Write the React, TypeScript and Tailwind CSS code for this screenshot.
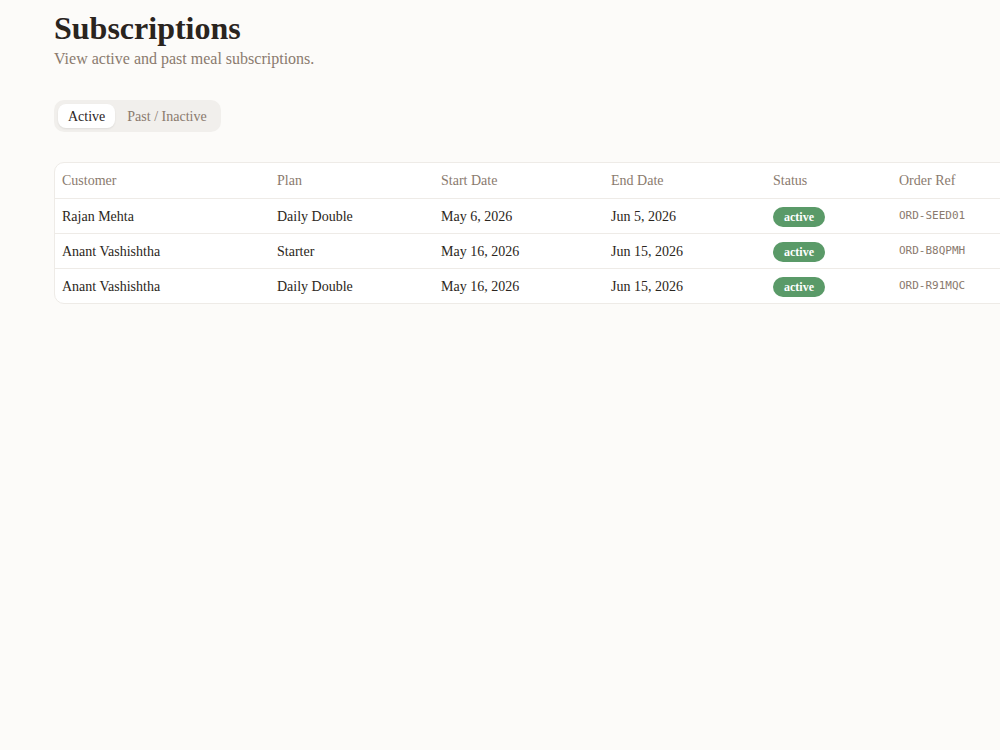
import React from "react";

const rows = [
  { c: "Rajan Mehta", p: "Daily Double", s: "May 6, 2026", e: "Jun 5, 2026", r: "ORD-SEED01" },
  { c: "Anant Vashishtha", p: "Starter", s: "May 16, 2026", e: "Jun 15, 2026", r: "ORD-B8QPMH" },
  { c: "Anant Vashishtha", p: "Daily Double", s: "May 16, 2026", e: "Jun 15, 2026", r: "ORD-R91MQC" },
];

const serif = { fontFamily: "Georgia, 'Liberation Serif', 'DejaVu Serif', serif" };

export default function App() {
  return (
    <div className="min-h-[750px] w-[1000px] overflow-hidden bg-[#fcfbf9] text-[#2b2620]" style={serif}>
      <div className="pl-[54px] pt-[10px]">
        <h1 className="text-[32px] font-bold leading-[37px] text-[#2a241e]">Subscriptions</h1>
        <p className="mt-[2px] text-[16px] leading-[20px] text-[#8a7a6e]">View active and past meal subscriptions.</p>
        <div className="mt-[31px] inline-flex h-[32px] items-center gap-[2px] rounded-[10px] bg-[#f1efec] p-[4px]">
          <button className="h-[24px] rounded-[8px] bg-white px-[10px] text-[14px] text-[#2a241e] shadow-[0_1px_2px_rgba(0,0,0,0.08)]">Active</button>
          <button className="h-[24px] px-[10px] text-[14px] text-[#8a7a6e]">Past / Inactive</button>
        </div>
        <div className="mt-[30px] w-[1100px] overflow-hidden rounded-[10px] border border-[#eeebe7] bg-white">
          <table className="w-full border-collapse text-left text-[14px]">
            <thead>
              <tr className="h-[35px] border-b border-[#eeebe7] text-[#8a7a6e]">
                <th className="w-[215px] pl-[7px] font-normal">Customer</th>
                <th className="w-[164px] pl-[7px] font-normal">Plan</th>
                <th className="w-[170px] pl-[7px] font-normal">Start Date</th>
                <th className="w-[162px] pl-[7px] font-normal">End Date</th>
                <th className="w-[126px] pl-[7px] font-normal">Status</th>
                <th className="pl-[7px] font-normal">Order Ref</th>
              </tr>
            </thead>
            <tbody>
              {rows.map((row, i) => (
                <tr key={i} className={"h-[35px] " + (i < rows.length - 1 ? "border-b border-[#eeebe7]" : "")}>
                  <td className="pl-[7px] pt-[1px]">{row.c}</td>
                  <td className="pl-[7px] pt-[1px]">{row.p}</td>
                  <td className="pl-[7px] pt-[1px]">{row.s}</td>
                  <td className="pl-[7px] pt-[1px]">{row.e}</td>
                  <td className="pl-[7px] pt-[1px]">
                    <span className="inline-flex h-[20px] items-center rounded-full bg-[#5a9a68] px-[11px] text-[12px] font-bold text-white">active</span>
                  </td>
                  <td className="pl-[7px] pt-[1px] text-[11px] text-[#8a7a6e]" style={{ fontFamily: "'DejaVu Sans Mono', 'Liberation Mono', monospace" }}>{row.r}</td>
                </tr>
              ))}
            </tbody>
          </table>
        </div>
      </div>
    </div>
  );
}
